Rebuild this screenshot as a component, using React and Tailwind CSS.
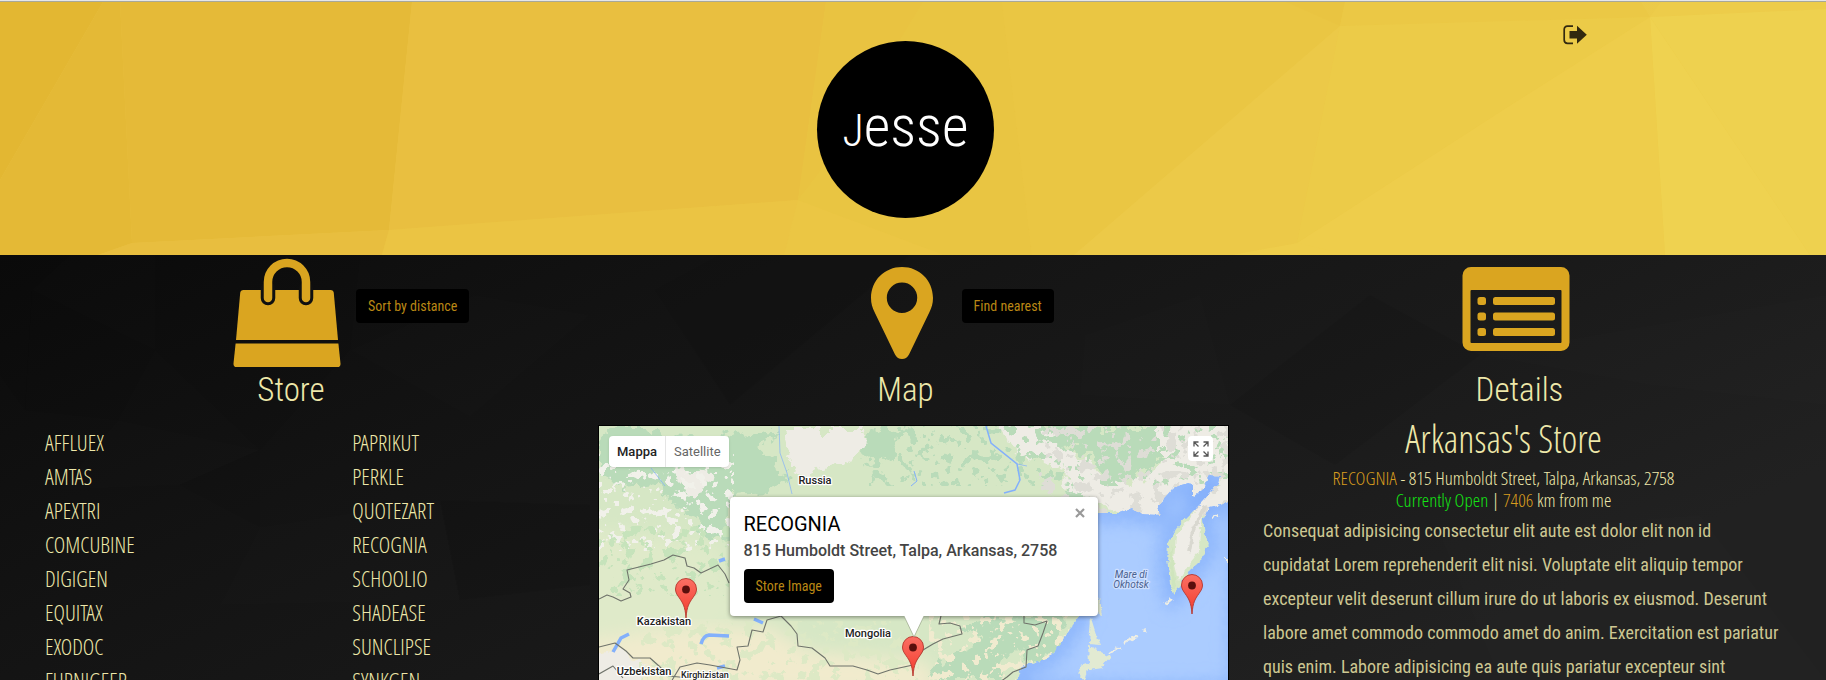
const LEFT_STORES = ["AFFLUEX", "AMTAS", "APEXTRI", "COMCUBINE", "DIGIGEN", "EQUITAX", "EXODOC", "FURNIGEER"];
const RIGHT_STORES = ["PAPRIKUT", "PERKLE", "QUOTEZART", "RECOGNIA", "SCHOOLIO", "SHADEASE", "SUNCLIPSE", "SYNKGEN"];

function HeaderFacets() {
  return (
    <svg className="absolute inset-0 h-full w-full" viewBox="0 2 1826 253" preserveAspectRatio="none" aria-hidden="true">
      <defs>
        <linearGradient id="gold" x1="0" x2="1">
          <stop offset="0" stopColor="#e9c044" />
          <stop offset="1" stopColor="#eccb49" />
        </linearGradient>
      </defs>
      <path d="M0 2H1826V255H0z" fill="url(#gold)" />
      <path d="M0 2H103L0 180z" fill="#e3b732" />
      <path d="M103 2H120L132 243L98 255H0V180z" fill="#e4b936" />
      <path d="M120 2H412L389 230L132 243z" fill="#e5ba38" />
      <path d="M412 2H826L798 200L389 230z" fill="#e9bf40" />
      <path d="M132 243L389 230L382 255H98z" fill="#e8be3f" />
      <path d="M389 230L798 200L784 255H382z" fill="#ebc443" />
      <path d="M826 2H923L818 174L798 200z" fill="#e9c341" />
      <path d="M798 200L944 255H784z" fill="#ebc644" />
      <path d="M923 2H1002L1032 255H944L798 200L818 174z" fill="#e9c542" />
      <path d="M1002 2H1286L1340 26L1074 255H1032z" fill="#eac643" />
      <path d="M1286 2H1345L1340 26z" fill="#e9c441" />
      <path d="M1340 26L1297 243L1232 255H1074z" fill="#ecc948" />
      <path d="M1345 2H1641L1650 17L1340 26z" fill="#ebc845" />
      <path d="M1340 26L1650 17L1500 112L1297 243z" fill="#eccb48" />
      <path d="M1650 17L1665 255H1297V243L1500 112z" fill="#eecd4b" />
      <path d="M1297 243L1350 255H1232z" fill="#eecd4b" />
      <path d="M1661 2H1826V9L1650 17z" fill="#edcc4a" />
      <path d="M1650 17L1826 9V255H1810z" fill="#eed14f" />
      <path d="M1650 17L1810 255H1665z" fill="#efd250" />
    </svg>
  );
}

function DarkFacets() {
  return (
    <svg className="absolute inset-0 h-full w-full" viewBox="0 0 1826 425" preserveAspectRatio="none" aria-hidden="true">
      <defs>
        <linearGradient id="coal" x1="0" y1="0" x2="1" y2="0.5">
          <stop offset="0" stopColor="#0b0b0b" />
          <stop offset="0.35" stopColor="#131313" />
          <stop offset="0.7" stopColor="#1a1a1a" />
          <stop offset="1" stopColor="#212121" />
        </linearGradient>
      </defs>
      <path d="M0 0H1826V425H0z" fill="url(#coal)" />
      <g fill="#000" fillOpacity="0.05">
        <path d="M0 0H70L32 35L25 155L0 120z" />
        <path d="M155 0H360L350 95L260 195L155 95z" />
        <path d="M32 35L155 95L118 165L25 155z" />
        <path d="M655 35L720 0H910L730 150z" />
        <path d="M1370 40L1480 100L1335 210L1230 150z" />
        <path d="M260 195V272L180 230z" />
        <path d="M440 245L590 250V330L460 345z" />
      </g>
      <g fill="#fff" fillOpacity="0.008">
        <path d="M350 95L475 40L590 60L470 162z" />
        <path d="M118 165L260 195L180 230L60 235z" />
        <path d="M260 272L440 245L460 345L220 350z" />
        <path d="M1085 80L1200 40L1230 150L1080 140z" />
        <path d="M1480 100L1826 40V150L1650 130z" />
        <path d="M1440 280L1700 260L1826 425H1500z" />
      </g>
    </svg>
  );
}

function BagIcon() {
  return (
    <svg className="h-[116px] w-[108px]" viewBox="0 0 108 116" aria-hidden="true">
      <path d="M10.500 35H97.500Q100.500 35 100.800 38L105 85H3L7.200 38Q7.500 35 10.500 35z" fill="#daa520" />
      <path d="M2.600 88.500H105.400L107.500 108.500Q107.700 112 104.500 112H3.500Q.3 112 .5 108.500z" fill="#daa520" />
      <path d="M35 34V43M73 34V43" stroke="#101010" strokeWidth="14.500" strokeLinecap="round" />
      <path d="M35 43V27a19 19 0 0 1 38 0V43" fill="none" stroke="#daa520" strokeWidth="8.500" strokeLinecap="round" />
    </svg>
  );
}

function PinIcon() {
  return (
    <svg className="h-[116px] w-[90px]" viewBox="0 0 90 116" aria-hidden="true">
      <path
        fillRule="evenodd"
        fill="#daa520"
        d="M45 12C62.500 12 76 25.500 76 43C76 49 74.600 52.500 72.500 57L52 99.500Q49.500 104 45 104Q40.500 104 38 99.500L17.500 57C15.400 52.500 14 49 14 43C14 25.500 27.500 12 45 12zM45 27.500a15.200 15.200 0 1 0 0 30.400a15.200 15.200 0 0 0 0 -30.400z"
      />
    </svg>
  );
}

function CardIcon() {
  return (
    <svg className="h-[116px] w-[108px]" viewBox="0 0 108 116" fill="#daa520" aria-hidden="true">
      <path fillRule="evenodd" d="M9 12H99a8.500 8.500 0 0 1 8.500 8.500V87.500A8.500 8.500 0 0 1 99 96H9A8.500 8.500 0 0 1 .5 87.500V20.500A8.500 8.500 0 0 1 9 12zM9.500 35Q8.500 35 8.500 36V87Q8.500 88 9.500 88H98.500Q99.500 88 99.500 87V36Q99.500 35 98.500 35z" />
      {[42, 57.5, 73].map((y) => (
        <g key={y}>
          <rect x="15.500" y={y} width="8.500" height="8" rx="2.500" />
          <rect x="31" y={y} width="62" height="8" rx="2.500" />
        </g>
      ))}
    </svg>
  );
}

function LogoutIcon() {
  return (
    <svg className="h-5 w-6" viewBox="0 0 24 20" aria-hidden="true">
      <path d="M10 1.200H4.500Q1.200 1.200 1.200 4.500V15Q1.200 18.300 4.500 18.300H10" fill="none" stroke="#33290f" strokeWidth="1.700" />
      <path d="M6.500 6H14V.8L23.800 9.700L14 18.700V13.500H6.500z" fill="#33290f" />
    </svg>
  );
}

function Marker({ x, y }) {
  return (
    <g transform={`translate(${x} ${y})`}>
      <path d="M0 0C-.8 -12 -3.500 -15.500 -7 -20.500C-9.500 -24 -10.500 -26 -10.500 -29A10.500 10.500 0 0 1 10.500 -29C10.500 -26 9.500 -24 7 -20.500C3.500 -15.500 .8 -12 0 0z" fill="url(#pin)" stroke="#b5352c" strokeWidth="0.900" />
      <circle cy="-28.500" r="3.900" fill="#5a0f0c" />
    </g>
  );
}

const SEA =
  "M498 87H520L534 82L543 89L561 90L559 79L574 62L588 57L594 58L594 71L606 61L610 49L621 50L619 58L603 76L588 91L576 104L569 117L568 134L571 157L574 169L581 161L591 144L603 134L606 124L610 119L606 107L604 94L611 82L619 80L640 70V266H414L422 241L440 236L448 233L458 223L470 205L480 190V87z";
const GREEN =
  "M20 0H48L62 12L80 8L110 20L135 4L175 2L160 25L190 50L172 66L130 68V118L108 112L92 90L70 72L60 60L22 62L0 50V18zM270 0L300 8L295 25L270 40L262 20zM425 0H565L560 30L520 60L500 45L480 22L440 20zM495 45L520 55L528 78H465L468 60zM395 190H470L455 225L435 235L412 225L400 254H330L350 225L385 215L360 200z";

function Terrain() {
  return (
    <svg className="absolute top-0 left-0 h-auto w-full" viewBox="0 0 629 256" role="img" aria-label="Map of stores">
      <defs>
        <linearGradient id="pin" x1="0" y1="0" x2="0" y2="1">
          <stop offset="0" stopColor="#fb7064" />
          <stop offset="1" stopColor="#f33a2c" />
        </linearGradient>
        <filter id="rough" x="-5%" y="-5%" width="110%" height="110%">
          <feTurbulence type="fractalNoise" baseFrequency="0.07" numOctaves="4" seed="8" />
          <feDisplacementMap in="SourceGraphic" scale="26" xChannelSelector="R" yChannelSelector="G" />
        </filter>
        <filter id="coast" x="-5%" y="-5%" width="110%" height="110%">
          <feTurbulence type="fractalNoise" baseFrequency="0.15" numOctaves="3" seed="3" />
          <feDisplacementMap in="SourceGraphic" scale="6" xChannelSelector="R" yChannelSelector="G" />
        </filter>
        <filter id="patches" x="0" y="0" width="100%" height="100%">
          <feTurbulence type="fractalNoise" baseFrequency="0.09" numOctaves="4" seed="12" />
          <feColorMatrix values="0 0 0 0 0  0 0 0 0 0  0 0 0 0 0  30 0 0 0 -17.2" />
          <feComposite in="SourceGraphic" operator="in" />
        </filter>
        <filter id="specks" x="0" y="0" width="100%" height="100%">
          <feTurbulence type="fractalNoise" baseFrequency="0.11" numOctaves="3" seed="31" />
          <feColorMatrix values="0 0 0 0 0  0 0 0 0 0  0 0 0 0 0  0 30 0 0 -17.6" />
          <feComposite in="SourceGraphic" operator="in" />
        </filter>
        <filter id="soft" x="-10%" y="-10%" width="120%" height="120%">
          <feGaussianBlur stdDeviation="9" />
        </filter>
        <clipPath id="seaClip">
          <path d={SEA} />
        </clipPath>
      </defs>
      <path d="M0 0H629V256H0z" fill="#d6e7c5" />
      <path d="M-20 100L120 118L140 190L60 256H-20z" fill="#dfeac9" filter="url(#soft)" />
      <path d="M-20 215L60 205L120 200L170 200L210 225L330 235L340 270H-20z" fill="#f1ebcd" filter="url(#soft)" />
      <g filter="url(#rough)">
        <path d={GREEN} fill="#b9dbb9" />
        <path d="M185 2H262L268 18L255 32L230 40L205 52L196 44L190 20zM395 -10H430L470 22L500 48L530 62L560 40L590 20L650 -30V90L600 85L545 95L500 80L470 60L455 38L420 30zM80 42L112 46L108 62L92 68L78 54zM-10 228L25 224L48 240L40 260H-10zM560 -20H650V70L600 60L560 60z" fill="#eeece5" />
      </g>
      <path d="M0 20H135V125H0z" fill="#f1f1ea" filter="url(#specks)" />
      <path d="M270 0H629V60H270z" fill="#b9dbb9" filter="url(#specks)" />
      <path d="M440 0H629V90H440z" fill="#deddd6" filter="url(#patches)" />
      <path d="M0 100H130V170H0z" fill="#c6e3bb" filter="url(#patches)" />
      <path d="M40 195H320V256H40z" fill="#dde9c5" filter="url(#patches)" />
      <path d="M330 190H470V256H330z" fill="#f0ebcf" filter="url(#specks)" />
      <g fill="none" stroke="#83b0fb" strokeWidth="1">
        <path d="M387 0L392 17L418 38L421 54L416 64L405 67" strokeWidth="1.500" />
        <path d="M418 38L428 40M180 0L181 27L188 47L193 68M52 42L66 60" strokeWidth="0.700" />
        <path d="M315 45L318 55L312 60" />
        <path d="M102 218Q104 210 110 209L130 210M14 226L22 212L30 208M118 242L126 240M155 193L164 197M120 135L126 133" strokeWidth="3.500" />
      </g>
      <g filter="url(#coast)">
        <path d={SEA} fill="#abccff" />
        <g clipPath="url(#seaClip)">
          <path d={SEA} fill="none" stroke="#86b1fb" strokeWidth="16" filter="url(#soft)" />
        </g>
        <g fill="#e2ead2">
          <path d="M490 180L500 172L504 188L498 186zM492 192L497 208L502 219L490 218z" />
          <path d="M489 219L502 226L512 231L503 241L489 243L486 256L479 248L482 240L490 237z" />
        </g>
        <path d="M566 178L572 173M510 228L520 221M524 217L538 211M544 206L548 204M613 92L618 90M627 130V136" stroke="#eeeee4" strokeWidth="2" fill="none" />
        <path d="M604 76L588 96L577 110L575 135L580 155L590 138L600 126L601 100L606 80L622 60L629 50V74L616 74z" fill="#efede7" />
        <path d="M573 118L575 140L578 160L574 165L570 135z" fill="#cfe5bd" />
        <path d="M606 80L594 104L590 126" stroke="#d9d8d0" strokeWidth="4" fill="none" />
      </g>
      <g fill="none" stroke="#6f736b" strokeWidth="1.100" strokeLinejoin="round">
        <path d="M0 173L8 169L14 171L22 175L32 171L31 167L24 163L30 154L28 144L52 138L65 134L74 129L86 132L88 140L95 142L102 147L119 139L126 148L130 157" />
        <path d="M182 190L192 200L198 208L199 220L213 222L226 232L231 240L254 240L268 244L279 248L291 244L314 239L324 224L334 218L344 213L363 208L361 200L351 197L340 198L342 190" />
        <path d="M182 190L168 194L164 206L153 204L149 220L138 221L141 234L138 244L111 239L98 237L81 241L72 256" />
        <path d="M0 221L16 217L27 225L34 232L51 232L60 240L70 250L90 252L110 246L130 248" />
        <path d="M425 190L425 197L436 199L448 195L444 207L439 220L428 224L427 241L414 246L408 251L401 256M0 248L14 240L24 252" />
      </g>
      <g fontFamily="Roboto, 'Liberation Sans', sans-serif" fontSize="11" fontWeight="500" fill="#222" stroke="#fff" strokeWidth="2.500" strokeLinejoin="round" paintOrder="stroke" textAnchor="middle">
        <text x="216" y="58">Russia</text>
        <text x="65" y="199">Kazakistan</text>
        <text x="269" y="211">Mongolia</text>
        <text x="45" y="249">Uzbekistan</text>
        <text x="106" y="252" fontSize="9">Kirghizistan</text>
        <g fontStyle="italic" fontSize="10" fill="#4a628f" stroke="#cfe0ff" fontWeight="400">
          <text x="532" y="152">Mare di</text>
          <text x="532" y="162">Okhotsk</text>
        </g>
      </g>
      <Marker x={87} y={192} />
      <Marker x={593} y={188} />
      <Marker x={314} y={250} />
    </svg>
  );
}

function DarkButton({ children, className = "" }) {
  return (
    <button type="button" className={`h-[34px] shrink-0 whitespace-nowrap rounded bg-black px-3 font-['Roboto_Condensed'] text-sm text-[#b98714] ${className}`}>
      {children}
    </button>
  );
}

function ColumnHead({ icon, title, action }) {
  return (
    <div className="pr-4 text-center">
      <div className="grid grid-cols-[1fr_auto_1fr] pr-2">
        <span />
        {icon}
        <div className="flex items-start pl-[15px] pt-[34px]">{action}</div>
      </div>
      <h2 className="font-['Roboto_Condensed'] text-[33px] leading-[38px] font-light text-[#eee8aa]">{title}</h2>
    </div>
  );
}

function StoreList({ stores }) {
  return (
    <ul className="font-['Open_Sans_Condensed_Light'] text-[22px] leading-[34px] font-light text-[#eee8aa]">
      {stores.map((s) => (
        <li key={s}>
          <a href={`#${s.toLowerCase()}`}>{s}</a>
        </li>
      ))}
    </ul>
  );
}

function InfoWindow() {
  return (
    <div className="absolute top-[71px] left-1/2 h-[119px] w-[368px] -translate-x-1/2 rounded-sm bg-white px-[14px] pt-[15px] shadow-[0_1px_4px_rgba(0,0,0,0.45)]">
      <button type="button" aria-label="Close" className="absolute top-[9px] right-[11px] p-[2px]">
        <svg className="h-[10px] w-[10px]" viewBox="0 0 10 10" aria-hidden="true">
          <path d="M1 1L9 9M9 1L1 9" stroke="#999" strokeWidth="2.200" />
        </svg>
      </button>
      <h3 className="font-[Roboto] text-[20px] leading-6 text-black">RECOGNIA</h3>
      <p className="mt-[5px] mb-2 font-[Roboto] text-base leading-5 font-medium text-[#444]">815 Humboldt Street, Talpa, Arkansas, 2758</p>
      <DarkButton>Store Image</DarkButton>
      <svg className="absolute top-full left-1/2 h-[21px] w-5 -translate-x-1/2" viewBox="0 0 20 21" aria-hidden="true">
        <path d="M0 0H20L10 21z" fill="#fff" />
        <path d="M0 0L10 21L20 0" fill="none" stroke="#8a9a7a" strokeOpacity="0.6" />
      </svg>
    </div>
  );
}

function StoreMap() {
  return (
    <div className="relative mt-4 flex-1 overflow-hidden border border-black bg-[#d6e7c5]">
      <Terrain />
      <div className="absolute top-[10px] left-[10px] flex h-[31px] overflow-hidden rounded-sm bg-white font-[Roboto] text-[13px] shadow">
        <button type="button" className="border-r border-[#e5e5e5] px-2 font-medium text-[#222]">Mappa</button>
        <button type="button" className="px-2 text-[#666]">Satellite</button>
      </div>
      <button type="button" aria-label="Fullscreen" className="absolute top-[10px] right-[15px] flex h-[25px] w-[25px] items-center justify-center rounded-sm bg-white">
        <svg className="h-4 w-4" viewBox="0 0 16 16" fill="none" stroke="#555" strokeWidth="1.300" aria-hidden="true">
          <path d="M1 5.500V1H5.500M1 1L5.500 5.500M10.500 1H15V5.500M15 1L10.500 5.500M1 10.500V15H5.500M1 15L5.500 10.500M15 10.500V15H10.500M15 15L10.500 10.500" />
        </svg>
      </button>
      <InfoWindow />
    </div>
  );
}

export default function App() {
  return (
    <div className="flex h-screen flex-col overflow-hidden border-t border-[#e6e6e8] bg-[#151515]">
      <header className="relative border-t border-[#a8a898]">
        <HeaderFacets />
        <div className="relative grid grid-cols-[598fr_631fr_597fr] pt-[39px] pb-[37px]">
          <span />
          <div className="flex justify-center pr-4">
            <h1 className="flex h-[177px] w-[177px] items-center justify-center rounded-full bg-black pb-2 font-['Roboto_Condensed'] text-[58px] leading-none font-light text-white">
              <span>
                <span className="text-[44px]">J</span>esse
              </span>
            </h1>
          </div>
          <div className="-mt-4 flex items-start justify-end pr-[40%]">
            <a href="#logout" aria-label="Log out">
              <LogoutIcon />
            </a>
          </div>
        </div>
      </header>
      <main className="relative flex min-h-0 flex-1 overflow-hidden">
        <DarkFacets />
        <div className="relative grid w-full grid-cols-[598fr_631fr_597fr]">
          <section>
            <ColumnHead icon={<BagIcon />} title="Store" action={<DarkButton>Sort by distance</DarkButton>} />
            <nav className="mt-4 grid grid-cols-[5fr_4fr] pl-[45px]">
              <StoreList stores={LEFT_STORES} />
              <StoreList stores={RIGHT_STORES} />
            </nav>
          </section>
          <section className="flex flex-col">
            <ColumnHead icon={<PinIcon />} title="Map" action={<DarkButton>Find nearest</DarkButton>} />
            <StoreMap />
          </section>
          <section>
            <ColumnHead icon={<CardIcon />} title="Details" />
            <div className="mt-1 pr-12 text-center font-['Open_Sans_Condensed_Light'] font-light text-[#eee8aa]">
              <h3 className="text-[38px] leading-[50px]">Arkansas's Store</h3>
              <p className="mt-1 text-[19px] leading-[22px] text-[#eee8aa]">
                <span className="text-[#d79c1e]">RECOGNIA</span> - 815 Humboldt Street, Talpa, Arkansas, 2758
                <br />
                <span className="text-[#14e614]">Currently Open</span> | <span className="text-[#d79c1e]">7406</span> km from me
              </p>
            </div>
            <p className="mt-[3px] pl-[34px] font-['Roboto_Condensed'] text-[18px] leading-[34px] whitespace-nowrap text-[#cdc792]">
              Consequat adipisicing consectetur elit aute est dolor elit non id
              <br />
              cupidatat Lorem reprehenderit elit nisi. Voluptate elit aliquip tempor
              <br />
              excepteur velit deserunt cillum irure do ut laboris ex eiusmod. Deserunt
              <br />
              labore amet commodo commodo amet do anim. Exercitation est pariatur
              <br />
              quis enim. Labore adipisicing ea aute quis pariatur excepteur sint
            </p>
          </section>
        </div>
      </main>
    </div>
  );
}
